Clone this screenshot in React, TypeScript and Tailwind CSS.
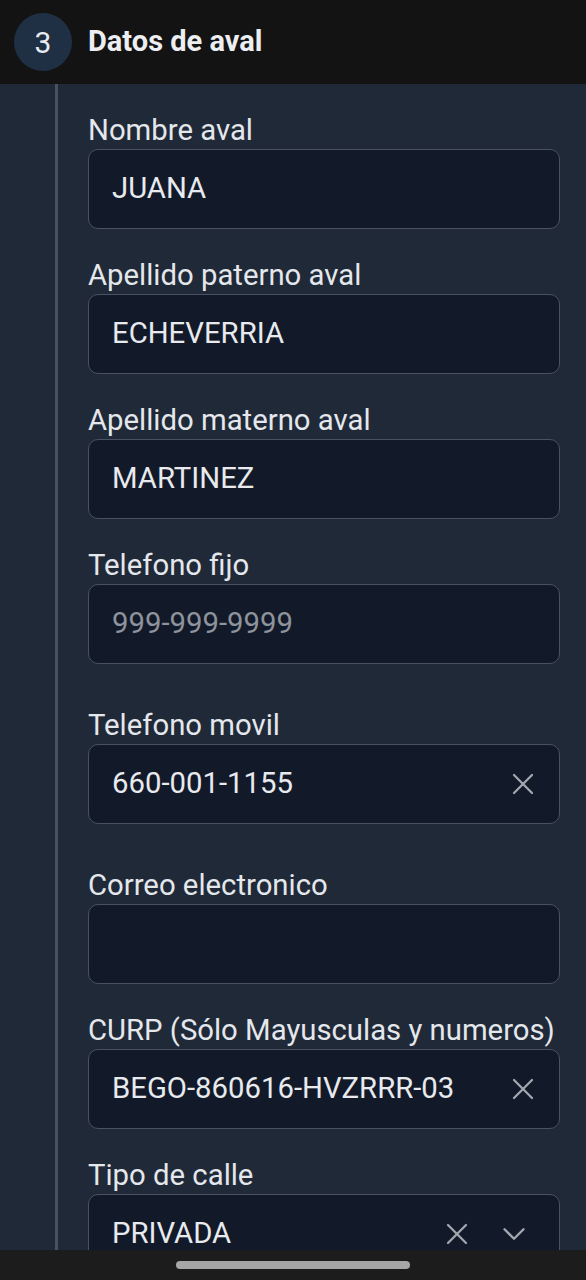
import { X, ChevronDown } from 'lucide-react';

type Field = {
  label: string;
  value?: string;
  placeholder?: string;
  clear?: boolean;
  select?: boolean;
  extra?: boolean;
};

const fields: Field[] = [
  { label: 'Nombre aval', value: 'JUANA' },
  { label: 'Apellido paterno aval', value: 'ECHEVERRIA' },
  { label: 'Apellido materno aval', value: 'MARTINEZ' },
  { label: 'Telefono fijo', placeholder: '999-999-9999', extra: true },
  { label: 'Telefono movil', value: '660-001-1155', clear: true, extra: true },
  { label: 'Correo electronico' },
  { label: 'CURP (Sólo Mayusculas y numeros)', value: 'BEGO-860616-HVZRRR-03', clear: true },
  { label: 'Tipo de calle', value: 'PRIVADA', clear: true, select: true },
];

export default function App() {
  return (
    <div className="w-[586px] h-[1280px] overflow-hidden flex flex-col bg-[#202938] font-['Roboto',sans-serif]">
      {/* Header */}
      <div className="h-[84px] shrink-0 bg-[#131314] flex items-center pl-[14px] gap-4">
        <div className="w-[58px] h-[58px] rounded-full bg-[#1f3044] flex items-center justify-center text-[30px] text-[#e8ebef]">3</div>
        <div className="text-[29px] font-bold text-[#eceef1]">Datos de aval</div>
      </div>

      {/* Body */}
      <div className="flex-1 flex min-h-0">
        <div className="w-[55px] shrink-0" />
        <div className="w-[3px] shrink-0 bg-[#485160]" />
        <div className="flex-1 pl-[30px] pr-[26px] pt-[30px] flex flex-col">
          {fields.map((f) => (
            <div key={f.label} className={f.extra ? 'mb-[45px]' : 'mb-[30px]'}>
              <div className="text-[29.3px] leading-[32px] text-[#e4e7eb] mb-[3px] whitespace-nowrap">{f.label}</div>
              <div className="h-[80px] rounded-[10px] bg-[#121a29] border border-[#4a5262] flex items-center pl-[23px] pr-[18px]">
                <div className={`flex-1 text-[29.3px] ${f.value ? 'text-[#e8eaee]' : 'text-[#8e939c]'}`}>
                  {f.value ?? f.placeholder ?? ''}
                </div>
                {f.clear && <X size={36} strokeWidth={1.5} className="text-[#a3a7ae] shrink-0" />}
                {f.select && <ChevronDown size={38} strokeWidth={1.5} className="text-[#a3a7ae] shrink-0 ml-[20px] mr-[8px]" />}
              </div>
            </div>
          ))}
        </div>
      </div>

      {/* Nav bar */}
      <div className="absolute left-0 top-[1250px] w-[586px] h-[30px] bg-[#1c1c1c] flex items-center justify-center">
        <div className="w-[234px] h-[8px] rounded-full bg-[#a6a6a6]" />
      </div>
    </div>
  );
}
